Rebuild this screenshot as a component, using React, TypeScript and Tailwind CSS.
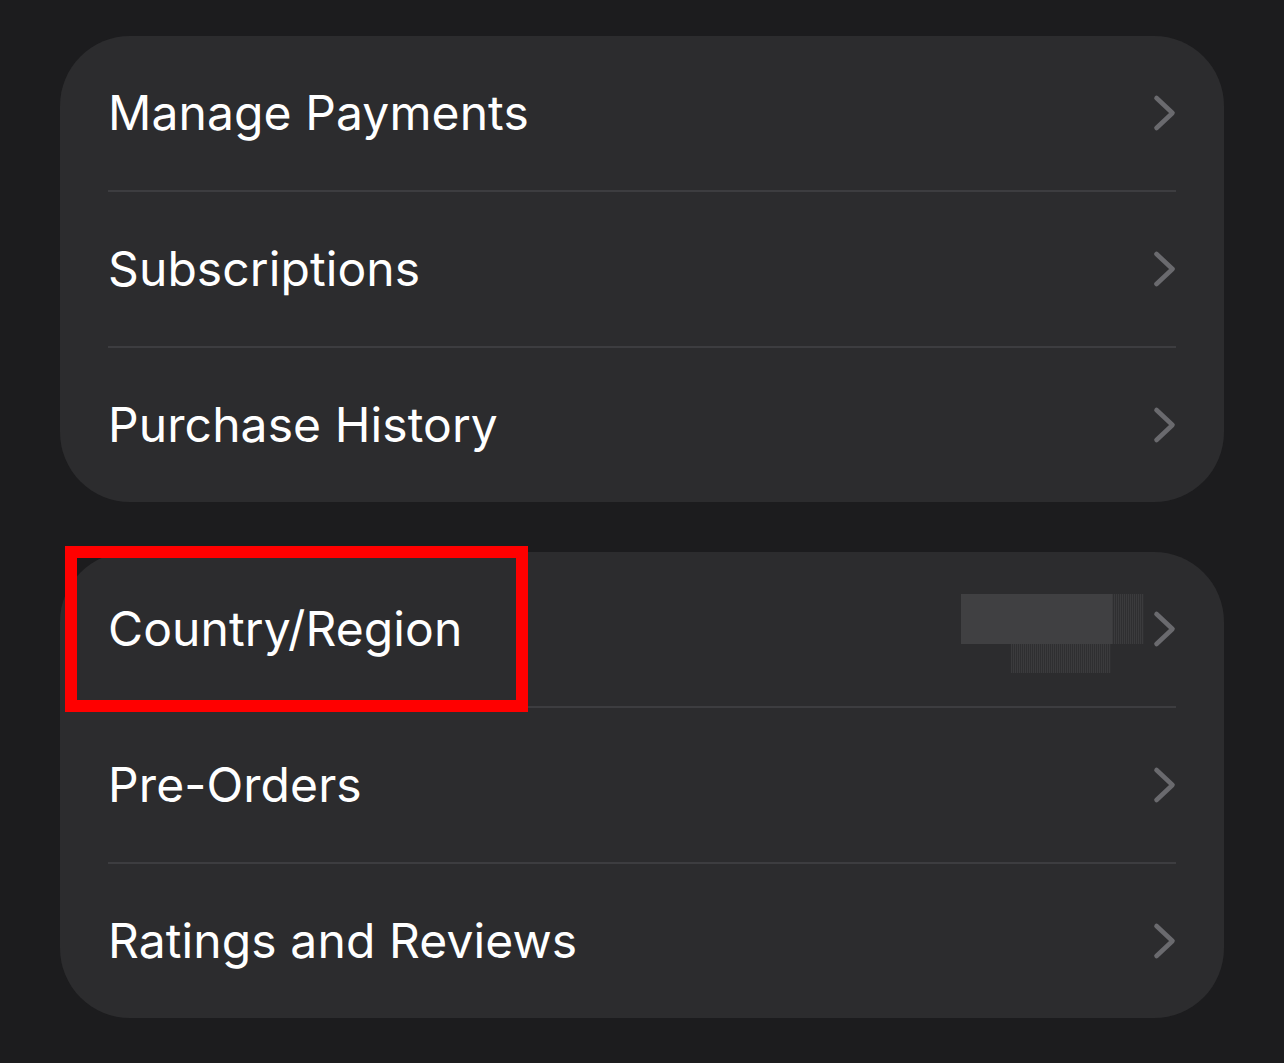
import { Fragment } from 'react';

type Row = { label: string; value?: boolean; highlight?: boolean };

const groups: Row[][] = [
  [{ label: 'Manage Payments' }, { label: 'Subscriptions' }, { label: 'Purchase History' }],
  [{ label: 'Country/Region', value: true, highlight: true }, { label: 'Pre-Orders' }, { label: 'Ratings and Reviews' }],
];

function Chevron() {
  return (
    <svg width="24" height="38" viewBox="0 0 24 38" className="shrink-0">
      <polyline
        points="4.5,4 20.5,19 4.5,34"
        fill="none"
        stroke="#6a6a6e"
        strokeWidth="4.6"
        strokeLinecap="round"
        strokeLinejoin="round"
      />
    </svg>
  );
}

// blurred-out value shown next to the country row
function HiddenValue() {
  const dither =
    'bg-[repeating-linear-gradient(90deg,#3b3b3d_0px,#3b3b3d_1px,#2f2f31_1px,#2f2f31_2px)]';
  return (
    <div className="flex flex-col items-start mt-[8px]">
      <div className="flex">
        <div className="w-[151px] h-[50px] bg-[#404042]" />
        <div className={`w-[32px] h-[50px] ${dither}`} />
      </div>
      <div className={`ml-[50px] w-[100px] h-[29px] ${dither}`} />
    </div>
  );
}

export default function App() {
  return (
    <div className="min-h-[1063px] bg-[#1c1c1e] px-[60px] pt-[36px] pb-[44px] flex flex-col gap-[50px] font-['Inter',sans-serif]">
      {groups.map((rows, gi) => (
        <div key={gi} className="relative bg-[#2c2c2e] rounded-[70px] px-[48px]">
          {rows.map((row, ri) => (
            <Fragment key={row.label}>
              {ri > 0 && <div className="h-[2px] bg-[#3d3d40]" />}
              <div className="h-[154px] flex items-center justify-between">
                <span className="text-white text-[48px] leading-none tracking-[0.1px]">{row.label}</span>
                <div className="flex items-center gap-[8px]">
                  {row.value && <HiddenValue />}
                  <Chevron />
                </div>
              </div>
            </Fragment>
          ))}
          {rows.some((r) => r.highlight) && (
            <div className="absolute left-[5px] top-[-6px] w-[463px] h-[166px] border-[12px] border-[#ff0000]" />
          )}
        </div>
      ))}
    </div>
  );
}
